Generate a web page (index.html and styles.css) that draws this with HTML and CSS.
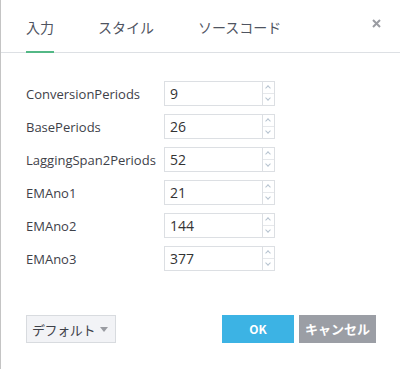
FILE: index.html
```html
<!DOCTYPE html>
<html>
<head>
    <title>Indicator settings</title>
    <link rel="stylesheet" href="styles.css">
</head>
<body>
    <div class="dialog">
        <div class="tabs">
            <div class="tab active">入力</div>
            <div class="tab">スタイル</div>
            <div class="tab">ソースコード</div>
            <div class="close">
                <svg width="9" height="9" viewBox="0 0 9 9">
                    <path d="M1 1 L8 8 M8 1 L1 8" stroke="#9a9ca2" stroke-width="2"/>
                </svg>
            </div>
        </div>

        <div class="form">
            <div class="row">
                <div class="label">ConversionPeriods</div>
                <div class="spin"><span class="value">9</span><div class="arrows"><span class="up"></span><span class="down"></span></div></div>
            </div>
            <div class="row">
                <div class="label">BasePeriods</div>
                <div class="spin"><span class="value">26</span><div class="arrows"><span class="up"></span><span class="down"></span></div></div>
            </div>
            <div class="row">
                <div class="label">LaggingSpan2Periods</div>
                <div class="spin"><span class="value">52</span><div class="arrows"><span class="up"></span><span class="down"></span></div></div>
            </div>
            <div class="row">
                <div class="label">EMAno1</div>
                <div class="spin"><span class="value">21</span><div class="arrows"><span class="up"></span><span class="down"></span></div></div>
            </div>
            <div class="row">
                <div class="label">EMAno2</div>
                <div class="spin"><span class="value">144</span><div class="arrows"><span class="up"></span><span class="down"></span></div></div>
            </div>
            <div class="row">
                <div class="label">EMAno3</div>
                <div class="spin"><span class="value">377</span><div class="arrows"><span class="up"></span><span class="down"></span></div></div>
            </div>
        </div>

        <div class="footer">
            <div class="defaults">デフォルト<span class="caret"></span></div>
            <div class="actions">
                <div class="btn ok">OK</div>
                <div class="btn cancel">キャンセル</div>
            </div>
        </div>
    </div>
</body>
</html>
```

FILE: styles.css
```css
body {
    margin: 0;
    font-family: 'Open Sans', 'Noto Sans CJK JP', sans-serif;
    color: #3e4149;
    background: #fff;
}

.dialog {
    height: 369px;
    box-sizing: border-box;
    border-left: 1px solid #c4c4c4;
}

/* tabs */
.tabs {
    display: flex;
    height: 53px;
    padding-left: 25px;
    box-shadow: inset 0 -1px 0 #dde0e4;
}

.tab {
    height: 53px;
    box-sizing: border-box;
    padding-top: 18px;
    margin-right: 44px;
    font-family: 'Noto Sans CJK JP', sans-serif;
    font-size: 14px;
    line-height: 18px;
    color: #4f5461;
    border-bottom: 2px solid transparent;
}

.tab.active {
    border-bottom-color: #53b886;
}

.close {
    margin-left: auto;
    margin-right: 19px;
    padding-top: 19px;
}

.close svg {
    display: block;
}

/* form */
.form {
    padding: 28px 0 0 25px;
    display: flex;
    flex-direction: column;
    gap: 8px;
}

.row {
    display: flex;
    align-items: center;
    height: 25px;
}

.label {
    width: 138px;
    font-size: 13px;
    color: #3e4149;
}

.spin {
    display: flex;
    width: 111px;
    height: 25px;
    box-sizing: border-box;
    border: 1px solid #dcdfe3;
}

.value {
    flex: 1;
    padding-left: 5px;
    font-size: 14px;
    line-height: 23px;
    color: #333;
}

.arrows {
    width: 11px;
    display: flex;
    flex-direction: column;
    border-left: 1px solid #dcdfe3;
}

.arrows span {
    flex: 1;
    position: relative;
}

.arrows .up {
    border-bottom: 1px solid #e6e8eb;
}

.arrows span::after {
    content: '';
    position: absolute;
    left: 3px;
    width: 3px;
    height: 3px;
    border-left: 1px solid #b6c3cf;
    border-top: 1px solid #b6c3cf;
}

.arrows .up::after {
    top: 4px;
    transform: rotate(45deg);
}

.arrows .down::after {
    top: 2px;
    transform: rotate(-135deg);
}

/* footer */
.footer {
    display: flex;
    justify-content: space-between;
    padding: 44px 24px 0 25px;
}

.defaults {
    display: flex;
    align-items: center;
    height: 28px;
    box-sizing: border-box;
    padding: 0 7px 0 5px;
    width: 90px;
    white-space: nowrap;
    background: #f2f3f6;
    border: 1px solid #d8dbdf;
    font-family: 'Noto Sans CJK JP', sans-serif;
    font-size: 13px;
    letter-spacing: -0.4px;
    color: #3e4149;
}

.caret {
    margin-left: auto;
    width: 0;
    height: 0;
    border-left: 4px solid transparent;
    border-right: 4px solid transparent;
    border-top: 5px solid #9a9ca2;
}

.actions {
    display: flex;
    gap: 5px;
}

.btn {
    height: 28px;
    line-height: 28px;
    text-align: center;
    color: #fff;
    font-weight: bold;
    font-family: 'Noto Sans CJK JP', sans-serif;
    font-size: 13px;
}

.ok {
    width: 72px;
    background: #3cb3e4;
    font-size: 12px;
}

.cancel {
    width: 77px;
    background: #9b9ea5;
}
```
